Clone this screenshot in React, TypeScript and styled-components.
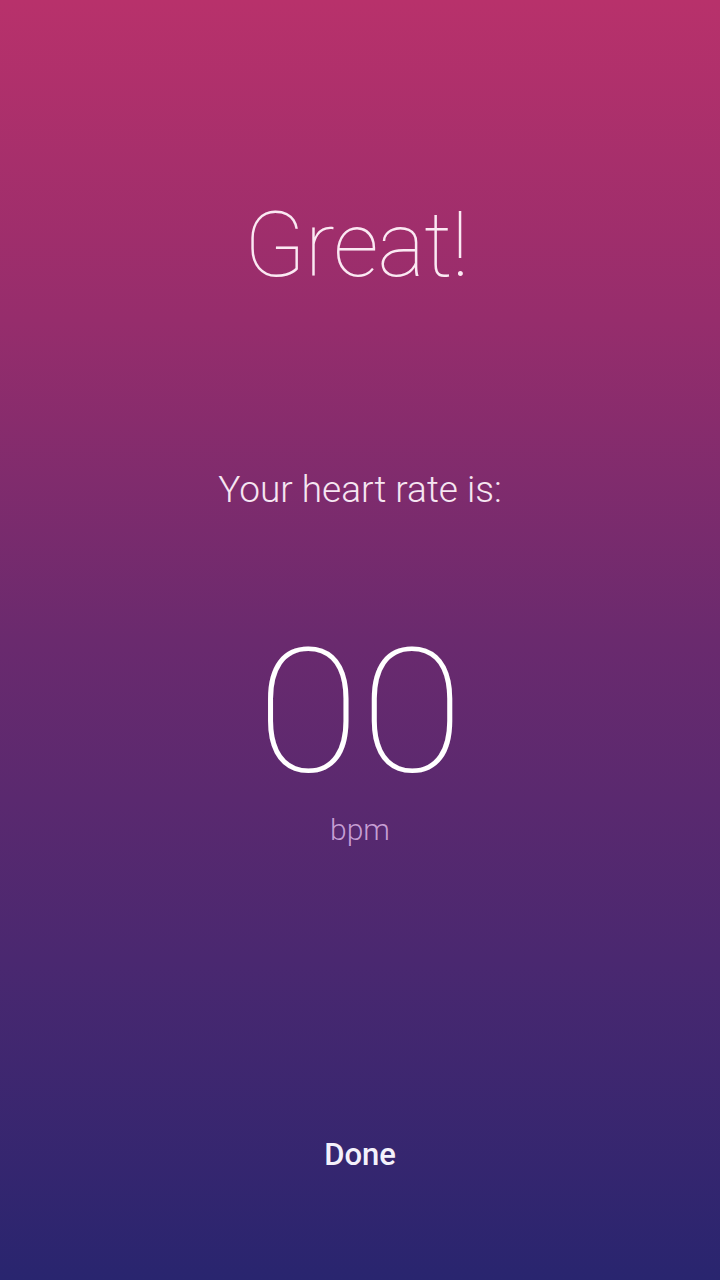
import React from "react";
import styled, { createGlobalStyle } from "styled-components";

const Global = createGlobalStyle`
  html, body { margin: 0; padding: 0; }
  body { font-family: Roboto, "Noto Sans", sans-serif; }
`;

const Screen = styled.div`
  width: 720px;
  height: 1280px;
  box-sizing: border-box;
  background: linear-gradient(
    180deg,
    #b8316b 0%,
    #962d6c 25%,
    #6a2a6e 50%,
    #4a2870 75%,
    #29256f 100%
  );
  display: flex;
  flex-direction: column;
  align-items: center;
  color: #fff;
  padding-top: 193px;
`;

const Title = styled.h1`
  margin: 0 8px 0 0;
  font-family: Roboto, sans-serif;
  font-weight: 100;
  font-size: 90px;
  line-height: 106px;
  color: #fbe9f3;
  letter-spacing: -1px;
`;

const Label = styled.div`
  margin-top: 169px;
  font-family: Roboto, sans-serif;
  font-weight: 300;
  font-size: 37px;
  line-height: 44px;
  color: #f6e6f2;
`;

const Value = styled.div`
  margin-top: 110px;
  font-family: Roboto, sans-serif;
  font-weight: 100;
  font-size: 172px;
  line-height: 180px;
  color: #fff;
  transform: scaleX(1.1);
`;

const Unit = styled.div`
  margin-top: 11px;
  font-family: Roboto, sans-serif;
  font-weight: 300;
  font-size: 30px;
  line-height: 34px;
  color: rgba(220, 180, 230, 0.85);
`;

const Spacer = styled.div`
  flex: 1;
`;

const DoneButton = styled.button`
  margin-bottom: 107px;
  background: none;
  border: none;
  padding: 0;
  font-family: Roboto, sans-serif;
  font-weight: 500;
  font-size: 31px;
  line-height: 36px;
  color: #f4f1fb;
  cursor: pointer;
`;

export default function App() {
  return (
    <>
      <Global />
      <Screen>
        <Title>Great!</Title>
        <Label>Your heart rate is:</Label>
        <Value>00</Value>
        <Unit>bpm</Unit>
        <Spacer />
        <DoneButton>Done</DoneButton>
      </Screen>
    </>
  );
}
